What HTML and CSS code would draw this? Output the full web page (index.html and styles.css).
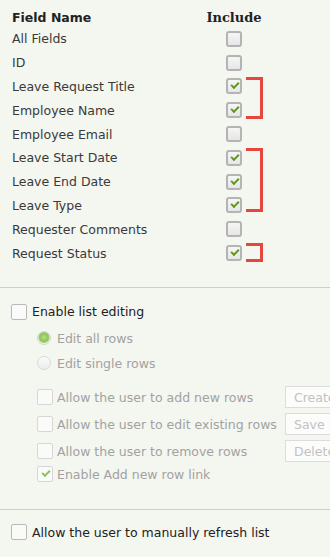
FILE: index.html
```html
<!DOCTYPE html>
<html lang="en">
<head>
  <meta charset="UTF-8">
  <meta name="viewport" content="width=device-width, initial-scale=1.0">
  <title>List Settings</title>
  <link rel="stylesheet" href="styles.css">
</head>
<body>

  <!-- Field selection -->
  <div class="fields">
    <div class="head-name">Field Name</div>
    <div class="head-include">Include</div>

    <div class="name">All Fields</div>
    <div class="cell"><span class="box"></span></div>

    <div class="name">ID</div>
    <div class="cell"><span class="box"></span></div>

    <div class="name">Leave Request Title</div>
    <div class="cell"><span class="box checked"></span></div>

    <div class="name">Employee Name</div>
    <div class="cell"><span class="box checked"></span></div>

    <div class="name">Employee Email</div>
    <div class="cell"><span class="box"></span></div>

    <div class="name">Leave Start Date</div>
    <div class="cell"><span class="box checked"></span></div>

    <div class="name">Leave End Date</div>
    <div class="cell"><span class="box checked"></span></div>

    <div class="name">Leave Type</div>
    <div class="cell"><span class="box checked"></span></div>

    <div class="name">Requester Comments</div>
    <div class="cell"><span class="box"></span></div>

    <div class="name">Request Status</div>
    <div class="cell"><span class="box checked"></span></div>

    <div class="bracket b1"></div>
    <div class="bracket b2"></div>
    <div class="bracket b3"></div>
  </div>

  <!-- List editing -->
  <div class="section editing">
    <div class="opt main">
      <span class="chk"></span>
      <span class="lbl">Enable list editing</span>
    </div>

    <div class="opt sub r1">
      <span class="radio on"></span>
      <span class="lbl">Edit all rows</span>
    </div>
    <div class="opt sub r2">
      <span class="radio"></span>
      <span class="lbl">Edit single rows</span>
    </div>

    <div class="opt sub btn-row first">
      <span class="chk"></span>
      <span class="lbl wide">Allow the user to add new rows</span>
      <span class="fake-btn">Create</span>
    </div>
    <div class="opt sub btn-row">
      <span class="chk"></span>
      <span class="lbl wide">Allow the user to edit existing rows</span>
      <span class="fake-btn">Save</span>
    </div>
    <div class="opt sub btn-row">
      <span class="chk"></span>
      <span class="lbl wide">Allow the user to remove rows</span>
      <span class="fake-btn">Delete</span>
    </div>
    <div class="opt sub link-row">
      <span class="chk on"></span>
      <span class="lbl">Enable Add new row link</span>
    </div>
  </div>

  <!-- Refresh -->
  <div class="section refresh">
    <div class="opt main">
      <span class="chk"></span>
      <span class="lbl">Allow the user to manually refresh list</span>
    </div>
  </div>

</body>
</html>
```

FILE: styles.css
```css
/* Page */
html {
  overflow: hidden;
}

body {
  margin: 0;
  background: #f4f6f0;
  color: #333;
  font-family: "DejaVu Sans", Verdana, sans-serif;
  font-size: 12.5px;
  width: 330px;
  overflow: hidden;
}

/* Field grid */
.fields {
  display: grid;
  grid-template-columns: 214px 16px 4px 17px;
  grid-template-rows: 20px;
  grid-auto-rows: 23.8px;
  padding: 7px 0 22px 12px;
  border-bottom: 1px solid #cdd0c6;
}

.head-name {
  grid-column: 1;
  font-weight: bold;
  color: #222;
  align-self: center;
}

.head-include {
  grid-column: 2;
  justify-self: center;
  align-self: center;
  font-family: "DejaVu Serif", "Liberation Serif", serif;
  font-size: 13px;
  font-weight: bold;
  color: #222;
  white-space: nowrap;
}

.name {
  grid-column: 1;
  align-self: center;
  color: #3a3a3a;
}

.cell {
  grid-column: 2;
  display: flex;
  align-items: center;
}

.box {
  box-sizing: border-box;
  width: 16px;
  height: 16px;
  border: 2px solid #b4b4b4;
  border-radius: 3px;
  background: linear-gradient(#f6f6f6, #e6e6e6);
  position: relative;
}

.box.checked::after,
.chk.on::after {
  content: "";
  position: absolute;
  left: 3px;
  top: 2px;
  width: 6px;
  height: 3px;
  border-left: 2px solid #5d9a1b;
  border-bottom: 2px solid #5d9a1b;
  transform: rotate(-45deg);
}

/* Red annotation brackets */
.bracket {
  grid-column: 4;
  border: 3px solid #e5473f;
  border-left: none;
  margin: 2px 0 3px;
}

.b1 { grid-row: 4 / 6; }
.b2 { grid-row: 7 / 10; margin-bottom: 5px; }
.b3 { grid-row: 11 / 12; }

/* Option sections */
.section {
  border-bottom: 1px solid #cdd0c6;
}

.editing {
  padding: 14px 0 25px;
}

.refresh {
  padding: 12px 0 0;
  border-bottom: none;
}

.opt {
  display: flex;
  align-items: center;
  height: 20px;
  white-space: nowrap;
}

.opt.main {
  padding-left: 11px;
  color: #222;
}

.opt.main .chk {
  margin-right: 5px;
}

.opt.sub {
  padding-left: 37px;
  color: #a2a2a2;
}

.opt.sub .chk {
  margin-right: 4px;
}

.opt.sub .radio {
  margin-right: 6px;
}

.r1 { margin-top: 6.5px; }
.r2 { margin-top: 5px; }

.btn-row {
  height: 22px;
  margin-top: 5px;
}

.btn-row.first {
  margin-top: 13px;
}

.link-row {
  margin-top: 2px;
}

.chk {
  box-sizing: border-box;
  flex: none;
  width: 16px;
  height: 16px;
  border: 1px solid #b9b9b9;
  border-radius: 2px;
  background: #fafbf8;
  position: relative;
}

.opt.sub .chk {
  border-color: #d6d6d6;
}

.chk.on::after {
  border-color: #8cc063;
  left: 4px;
  top: 3px;
}

.radio {
  box-sizing: border-box;
  flex: none;
  width: 14px;
  height: 14px;
  border-radius: 50%;
  border: 1px solid #d8d8d8;
  background: linear-gradient(#fbfbfb, #ececec);
}

.radio.on {
  border-color: #d2d8c8;
  background: radial-gradient(circle at 50% 45%, #b6e08a 0, #8ec45a 4px, #9fcc75 5px, #eef1ea 6px);
}

.lbl.wide {
  flex: none;
  width: 228px;
}

.fake-btn {
  box-sizing: border-box;
  flex: none;
  height: 22px;
  width: 80px;
  padding: 0 8px;
  display: flex;
  align-items: center;
  border: 1px solid #dcdcdc;
  background: #fcfcfb;
  color: #c2c2c2;
}
```
